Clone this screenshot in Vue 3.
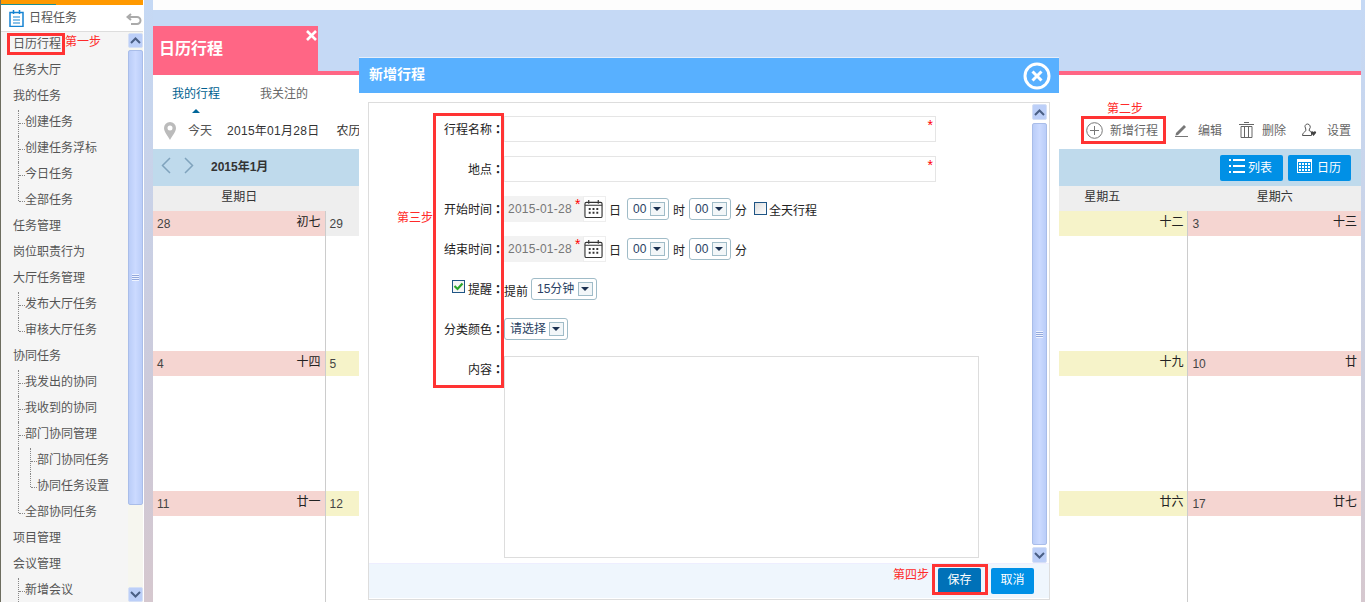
<script setup>
const menu = [
  { t: '日历行程', l: 0 }, { t: '任务大厅', l: 0 }, { t: '我的任务', l: 0 },
  { t: '创建任务', l: 1 }, { t: '创建任务浮标', l: 1 }, { t: '今日任务', l: 1 }, { t: '全部任务', l: 1, end: true },
  { t: '任务管理', l: 0 }, { t: '岗位职责行为', l: 0 }, { t: '大厅任务管理', l: 0 },
  { t: '发布大厅任务', l: 1 }, { t: '审核大厅任务', l: 1, end: true },
  { t: '协同任务', l: 0 },
  { t: '我发出的协同', l: 1 }, { t: '我收到的协同', l: 1 }, { t: '部门协同管理', l: 1 },
  { t: '部门协同任务', l: 2 }, { t: '协同任务设置', l: 2, end: true },
  { t: '全部协同任务', l: 1, end: true },
  { t: '项目管理', l: 0 }, { t: '会议管理', l: 0 }, { t: '新增会议', l: 1 },
]
const weekdays = ['星期日', '星期一', '星期二', '星期三', '星期四', '星期五', '星期六']
const weeks = [
  [['28', '初七', 'p'], ['29', '初八', 'g'], ['30', '初九', 'g'], ['31', '初十', 'g'], ['1', '十一', 'y'], ['2', '十二', 'y'], ['3', '十三', 'p']],
  [['4', '十四', 'p'], ['5', '十五', 'y'], ['6', '十六', 'y'], ['7', '十七', 'y'], ['8', '十八', 'y'], ['9', '十九', 'y'], ['10', '廿', 'p']],
  [['11', '廿一', 'p'], ['12', '廿二', 'y'], ['13', '廿三', 'y'], ['14', '廿四', 'y'], ['15', '廿五', 'y'], ['16', '廿六', 'y'], ['17', '廿七', 'p']],
]
</script>

<template>
  <div class="page">
    <aside class="side">
      <div class="top-bar"><i></i></div>
      <div class="side-head">
        <svg class="note" width="15" height="17" viewBox="0 0 15 17" fill="none" stroke="#1583d2">
          <rect x="1" y="2.500" width="13" height="14" stroke-width="1.500" />
          <path d="M4.500 0v4M10.500 0v4" stroke-width="1.500" />
          <path d="M4 7h7M4 10h7M4 13h7" stroke-width="1.200" />
        </svg>
        <span class="head-text">日程任务</span>
        <svg class="back" width="16" height="12" viewBox="0 0 16 12" fill="none" stroke="#aaa" stroke-width="2">
          <path d="M5 1 1.500 4 5 7" />
          <path d="M2 4h9a3.500 3.500 0 0 1 0 7H5" />
        </svg>
      </div>
      <div class="side-body">
        <ul class="menu">
          <li v-for="m in menu" :key="m.t" :class="['l' + m.l, { end: m.end }]">
            <i v-if="m.l === 2" class="outer"></i>
            {{ m.t }}
          </li>
        </ul>
        <div class="sbar">
          <div class="sbtn"><svg width="11" height="7" viewBox="0 0 11 7"><path d="M1 6l4.500-4.500L10 6" fill="none" stroke="#4a5f85" stroke-width="2" /></svg></div>
          <div class="sthumb main-thumb"><b></b></div>
          <div class="sbtn bottom"><svg width="11" height="7" viewBox="0 0 11 7"><path d="M1 1l4.500 4.500L10 1" fill="none" stroke="#4a5f85" stroke-width="2" /></svg></div>
        </div>
      </div>
    </aside>
    <div class="gutter"></div>

    <main class="main">
      <div class="white-strip"></div>
      <div class="band">
        <div class="tab">
          日历行程
          <svg class="tab-x" width="11" height="11" viewBox="0 0 11 11"><path d="m1 1 9 9m0-9-9 9" stroke="#fff" stroke-width="2.600" /></svg>
        </div>
      </div>
      <div class="panel">
        <div class="tabs">
          <span class="on">我的行程</span>
          <span>我关注的</span>
        </div>
        <div class="tool">
          <svg class="pin" width="12" height="18" viewBox="0 0 12 18"><path fill-rule="evenodd" d="M6 0a6 6 0 0 1 6 6c0 4-4 8-6 12C4 14 0 10 0 6a6 6 0 0 1 6-6zm0 3.500a2.500 2.500 0 1 0 0 5 2.500 2.500 0 0 0 0-5z" fill="#bbb" /></svg>
          <span class="today">今天</span>
          <span class="date">2015年01月28日</span>
          <span class="lunar">农历</span>
          <div class="actions">
            <span class="act add">
              <svg width="17" height="17" viewBox="0 0 17 17" fill="none" stroke="#777"><circle cx="8.500" cy="8.500" r="7.800" /><path d="M8.500 4v9M4 8.500h9" /></svg>
              新增行程
            </span>
            <span class="act edit">
              <svg width="13" height="14" viewBox="0 0 13 14"><path d="M1 10 9 2l2 2-8 8-2.500.5z" fill="#777" /><path d="M0 13.500h13" stroke="#777" /></svg>
              编辑
            </span>
            <span class="act del">
              <svg width="15" height="16" viewBox="0 0 15 16" fill="none" stroke="#666"><path d="M0 2.500h15M5 .5h5M2 4.500h11v11H2zM5.500 4.500v11M9.500 4.500v11" /></svg>
              删除
            </span>
            <span class="act set">
              <svg width="15" height="14" viewBox="0 0 15 14"><path d="M5.500 1a3 3 0 0 1 2 5L7 7.500c1.500.5 2.500 1.500 2.500 2.500v2.500H.5c0-2.500 2-3.500 3.500-5L3.500 5a2.500 2.500 0 0 1 2-4z" fill="none" stroke="#555" /><path d="M11.500 13 9 10c-.8-1.500 1.500-2.500 2.500-1 1-1.500 3.300-.5 2.500 1z" fill="#444" /></svg>
              设置
            </span>
          </div>
        </div>
      </div>
      <div class="nav-bar">
        <svg class="chev" width="33" height="17" viewBox="0 0 33 17" fill="none" stroke="#7fa3bd" stroke-width="1.500"><path d="M9 1 1.500 8.500 9 16M24 1l7.500 7.500L24 16" /></svg>
        <b class="month">2015年1月</b>
        <div class="views">
          <span class="vbtn v-list">
            <svg width="16" height="14" viewBox="0 0 16 14" fill="#fff"><path d="M0 0h2v2H0zM4 0h12v2H4zM0 6h2v2H0zM4 6h12v2H4zM0 12h2v2H0zM4 12h12v2H4z" /></svg>
            列表
          </span>
          <span class="vbtn v-cal">
            <svg width="15" height="14" viewBox="0 0 15 14" fill="#fff"><path fill-rule="evenodd" d="M0 0h15v14H0zM1 3v10h13V3z" /><path d="M2 4h2v2H2zM5 4h2v2H5zM8 4h2v2H8zM11 4h2v2h-2zM2 7h2v2H2zM5 7h2v2H5zM8 7h2v2H8zM11 7h2v2h-2zM2 10h2v2H2zM5 10h2v2H5zM8 10h2v2H8zM11 10h2v2h-2z" /></svg>
            日历
          </span>
        </div>
      </div>
      <div class="week-head">
        <span v-for="d in weekdays" :key="d">{{ d }}</span>
      </div>
      <div v-for="(w, i) in weeks" :key="i" class="week">
        <div v-for="c in w" :key="c[0]" class="cell">
          <div :class="['cell-head', c[2]]"><span>{{ c[0] }}</span><span class="lun">{{ c[1] }}</span></div>
        </div>
      </div>
    </main>
    <div class="edge"></div>

    <section class="dialog">
      <header class="dlg-title">
        新增行程
        <svg class="dlg-close" width="28" height="28" viewBox="0 0 28 28" fill="none" stroke="#fff"><circle cx="14" cy="14" r="12" stroke-width="3" /><path d="m9.500 9.500 9 9m0-9-9 9" stroke-width="3" /></svg>
      </header>
      <div class="frame">
        <div class="frame-main">
          <form class="form">
            <div class="row">
              <label>行程名称<em>：</em></label>
              <div class="inp"><i class="star">*</i></div>
            </div>
            <div class="row">
              <label>地点<em>：</em></label>
              <div class="inp"><i class="star">*</i></div>
            </div>
            <div v-for="lab in ['开始时间', '结束时间']" :key="lab" class="row">
              <label>{{ lab }}<em>：</em></label>
              <div class="dt"><span>2015-01-28</span><i class="star">*</i></div>
              <div class="cal">
                <svg width="20" height="20" viewBox="0 0 20 20" fill="none" stroke="#333"><rect x="1" y="3" width="18" height="16" rx="1.500" stroke-width="1.200" /><path d="M5 .5v4M15 .5v4M1 6h18" stroke-width="1.200" /><path d="M5 9h2v2H5zM9 9h2v2H9zM13 9h2v2h-2zM5 13h2v2H5zM9 13h2v2H9zM13 13h2v2h-2z" fill="#333" stroke="none" /></svg>
              </div>
              <span class="unit u1">日</span>
              <span class="sel num">00<i class="arrow"></i></span>
              <span class="unit u2">时</span>
              <span class="sel num">00<i class="arrow"></i></span>
              <span class="unit u3">分</span>
              <template v-if="lab === '开始时间'">
                <i class="chk"></i><span class="allday">全天行程</span>
              </template>
            </div>
            <div class="row">
              <label><i class="chk on"><svg width="11" height="9" viewBox="0 0 11 9"><path d="m1.500 4 3 3 5-5.500" fill="none" stroke="#2aa52a" stroke-width="2.200" /></svg></i>提醒<em>：</em></label>
              <span class="ahead">提前</span>
              <span class="sel wide">15分钟<i class="arrow"></i></span>
            </div>
            <div class="row">
              <label>分类颜色<em>：</em></label>
              <span class="sel pick">请选择<i class="arrow"></i></span>
            </div>
            <div class="row content">
              <label>内容<em>：</em></label>
              <div class="area"></div>
            </div>
          </form>
          <div class="sbar dlg-bar">
            <div class="sbtn"><svg width="11" height="7" viewBox="0 0 11 7"><path d="M1 6l4.500-4.500L10 6" fill="none" stroke="#4a5f85" stroke-width="2" /></svg></div>
            <div class="sthumb dlg-thumb"><b></b></div>
            <div class="sbtn"><svg width="11" height="7" viewBox="0 0 11 7"><path d="M1 1l4.500 4.500L10 1" fill="none" stroke="#4a5f85" stroke-width="2" /></svg></div>
          </div>
        </div>
        <footer class="foot">
          <span class="btn save">保存</span>
          <span class="btn">取消</span>
        </footer>
      </div>
    </section>

    <span class="mark box1"></span>
    <span class="note-red n1">第一步</span>
    <span class="mark box2"></span>
    <span class="note-red n2">第二步</span>
    <span class="mark box3"></span>
    <span class="note-red n3">第三步</span>
    <span class="mark box4"></span>
    <span class="note-red n4">第四步</span>
  </div>
</template>

<style scoped>
.page {
  position: relative;
  display: flex;
  width: 1365px;
  height: 602px;
  overflow: hidden;
  background: #c5d9f5;
  font: 12px "Liberation Sans", "Noto Sans CJK SC", sans-serif;
  color: #333;
}
ul { margin: 0; padding: 0; list-style: none; }
em, i { font-style: normal; }

/* sidebar */
.side { width: 143px; flex: none; display: flex; flex-direction: column; border-left: 1px solid #6d6d5f; box-sizing: border-box; background: #f5f5f5; }
.top-bar { height: 5px; background: #ff9900; position: relative; }
.top-bar i { position: absolute; left: 0; bottom: 0; width: 55px; height: 1px; background: #1f8f8f; }
.side-head { height: 27px; flex: none; box-sizing: border-box; background: #fff; border-bottom: 1px solid #ddd; display: flex; align-items: center; color: #555; position: relative; padding-left: 8px; }
.note { margin-right: 5px; }
.head-text { margin-top: -3px; }
.back { position: absolute; right: 1px; top: 8px; }
.side-body { flex: 1; display: flex; min-height: 0; }
.menu { width: 127px; height: 570px; color: #555; flex: none; }
.menu li { height: 26px; line-height: 24px; position: relative; padding-left: 12px; box-sizing: border-box; white-space: nowrap; }
.menu li.l1 { padding-left: 24px; }
.menu li.l2 { padding-left: 36px; }
.menu li.l1::before, .menu li.l2::before, .menu .outer { content: ""; position: absolute; left: 17px; top: 0; height: 100%; border-left: 1px dotted #888; }
.menu li.l2::before { left: 29px; }
.menu li.end::before { height: 50%; }
.menu li.l1::after, .menu li.l2::after { content: ""; position: absolute; left: 18px; top: 50%; width: 6px; border-top: 1px dotted #888; }
.menu li.l2::after { left: 30px; }

/* scrollbars */
.sbar { width: 15px; flex: none; background: #f6f6ef; display: flex; flex-direction: column; padding-top: 1px; }
.sbtn { height: 15px; flex: none; background: #bccff8; border: 1px solid #d5e0f6; border-radius: 2px; box-sizing: border-box; display: flex; align-items: center; justify-content: center; }
.sbtn.bottom { margin-top: auto; }
.sthumb { margin-top: 2px; background: linear-gradient(90deg, #bacdf8, #cbdaff 50%, #bacdf8); border: 1px solid #a9bde9; border-radius: 2px; box-sizing: border-box; display: flex; align-items: center; justify-content: center; }
.sthumb b { width: 7px; height: 7px; background: repeating-linear-gradient(#eef3ff 0 1px, #93a9dc 1px 2px); }
.main-thumb { height: 455px; }

.gutter { width: 10px; flex: none; background: linear-gradient(#c5d9f5, #cdc9d8 70%, #d6c8cf); border-left: 1px solid #fff; box-sizing: border-box; }

/* main */
.main { width: 1208px; flex: none; display: flex; flex-direction: column; }
.edge { flex: 1; background: linear-gradient(#c5d9f5, #cdd0e0 60%, #d6c8cf); }
.white-strip { height: 10px; flex: none; background: #fdfdfd; }
.band { height: 61px; flex: none; display: flex; align-items: flex-end; border-bottom: 4px solid #ff6685; box-sizing: content-box; }
.tab { position: relative; width: 165px; height: 45px; background: #ff6685; color: #fff; font-size: 16px; font-weight: 700; line-height: 46px; padding-left: 6px; box-sizing: border-box; }
.tab-x { position: absolute; right: 1px; top: 4px; }
.panel { height: 74px; flex: none; background: #fff; display: flex; flex-direction: column; }
.tabs { height: 37px; display: flex; gap: 40px; padding: 11px 0 0 19px; box-sizing: border-box; color: #666; flex: none; }
.tabs span { line-height: 17px; position: relative; }
.tabs .on { color: #005f8f; }
.tabs .on::after { content: ""; position: absolute; left: 20px; top: 23px; border: 4px solid transparent; border-top: 0; border-bottom: 4px solid #006699; }
.tool { flex: 1; display: flex; align-items: center; padding: 0 0 3px 11px; box-sizing: border-box; position: relative; color: #555; }
.pin { margin-top: 3px; }
.today { margin-left: 12px; }
.date { margin-left: 15px; color: #333; letter-spacing: 0.28px; }
.lunar { margin-left: 17px; color: #333; }
.actions { margin-left: auto; display: flex; align-items: center; color: #666; padding-right: 10px; }
.act { display: flex; align-items: center; }
.act svg { margin-top: 2px; }
.add svg { margin-right: 7px; }
.edit { margin-left: 17px; }
.edit svg { margin-right: 10px; }
.del { margin-left: 17px; }
.del svg { margin-right: 8px; }
.set { margin-left: 16px; }
.set svg { margin-right: 10px; }

.nav-bar { height: 37px; flex: none; background: #bfdaec; display: flex; align-items: center; padding-left: 8px; }
.chev { margin-bottom: 4px; }
.month { margin-left: 17px; margin-bottom: 4px; font-size: 12px; color: #333; }
.views { margin-left: auto; display: flex; gap: 5px; padding-right: 10px; }
.vbtn { width: 63px; height: 26px; background: #0090e6; color: #fff; border-radius: 2px; display: flex; align-items: center; padding: 0 0 3px 9px; box-sizing: border-box; font-size: 12px; }
.v-list { gap: 3px; }
.v-cal { gap: 5px; }
.week-head { height: 25px; flex: none; display: grid; grid-template-columns: repeat(7, 1fr); background: #eee; text-align: center; line-height: 22px; color: #333; }
.week { height: 140px; flex: none; display: grid; grid-template-columns: repeat(7, 1fr); background: #fff; }
.cell { border-right: 1px solid #ccc; }
.cell:last-child { border-right: 0; }
.cell-head { height: 25px; display: flex; justify-content: space-between; padding: 0 4px; color: #444; line-height: 27px; }
.cell-head.p { background: #f5d5d1; }
.cell-head.y { background: #f6f3c9; }
.cell-head.g { background: #eee; }
.lun { color: #222; line-height: 23px; }

/* dialog */
.dialog { position: absolute; left: 359px; top: 57px; width: 700px; height: 560px; background: #fff; border-top: 1px solid #e6eefa; box-sizing: border-box; }
.dlg-title { height: 35px; background: #58b0ff; color: #fff; font-size: 14px; font-weight: 700; line-height: 32px; padding-left: 10px; position: relative; }
.dlg-close { position: absolute; right: 8px; top: 4px; }
.frame { margin: 9px 0 0 9px; width: 682px; height: 498px; border: 1px solid #ddd; box-sizing: border-box; display: flex; flex-direction: column; }
.frame-main { height: 460px; display: flex; flex: none; }
.form { width: 663px; flex: none; padding-top: 6px; box-sizing: border-box; }
.row { height: 40px; display: flex; align-items: center; color: #222; position: relative; }
.row label { width: 135px; flex: none; text-align: right; display: flex; justify-content: flex-end; align-items: center; margin-top: -1px; }
.row em { font-family: "Noto Sans CJK TC", sans-serif; font-weight: 700; width: 12px; text-align: center; }
.star { color: #f00; position: absolute; font-size: 14px; line-height: 12px; }
.inp { width: 432px; height: 26px; border: 1px solid #e5e5e5; border-left-color: #f0f0f0; box-sizing: border-box; position: relative; }
.inp .star { right: 2px; top: 2px; }
.dt { width: 79px; height: 26px; background: #f2f2f2; color: #777; line-height: 26px; padding-left: 4px; box-sizing: border-box; position: relative; font-size: 12px; letter-spacing: 0.25px; white-space: nowrap; }
.dt .star { left: 71px; top: 2px; }
.cal { width: 23px; height: 26px; border: 1px solid #eee; box-sizing: border-box; display: flex; align-items: center; justify-content: center; margin-left: 0; padding-right: 2px; }
.unit { width: 12px; flex: none; }
.u1 { margin: 0 6px 0 3px; }
.u2 { margin: 0 4px; }
.u3 { margin: 0 6px 0 4px; }
.sel { height: 22px; border: 1px solid #a0bcc8; border-radius: 3px; box-sizing: border-box; display: flex; align-items: center; color: #2a3f63; position: relative; padding-left: 5px; }
.sel.num { width: 42px; }
.sel.wide { width: 66px; margin-left: 3px; padding-bottom: 3px; }
.sel.pick { width: 64px; padding-bottom: 3px; }
.arrow { position: absolute; right: 3px; top: 3px; width: 15px; height: 14px; background: #f2f6f8; border: 1px solid #a0bcc8; box-sizing: border-box; }
.arrow::after { content: ""; position: absolute; left: 2px; top: 4px; border: 4px solid transparent; border-bottom: 0; border-top: 4px solid #1b3050; }
.chk { width: 13px; height: 13px; border: 1px solid #1f5585; background: linear-gradient(135deg, #ddd, #fff); box-sizing: border-box; flex: none; margin-left: 1px; margin-top: -2px; display: inline-flex; align-items: center; justify-content: center; }
.chk.on { margin: -4px 3px 0 0; background: #f5f5f5; }
.allday { margin-left: 2px; }
.ahead { width: 24px; flex: none; margin-top: 2px; }
.content { height: 202px; align-items: flex-start; padding-top: 7px; }
.content label { height: 26px; }
.area { width: 475px; height: 202px; border: 1px solid #ddd; box-sizing: border-box; }
.dlg-bar { height: 460px; background: #fff; padding-top: 1px; margin-top: 0; }
.dlg-bar .sbtn { height: 16px; }
.dlg-thumb { height: 422px; margin: 3px 0 2px; }
.foot { height: 35px; flex: none; background: #eff6fd; display: flex; justify-content: flex-end; align-items: center; gap: 10px; padding-right: 15px; box-sizing: border-box; border-top: 1px solid #eef; }
.btn { width: 43px; height: 26px; background: #0090e6; color: #fff; text-align: center; line-height: 25px; border-radius: 2px; }
.btn.save { background: #0071b8; }

/* annotations */
.mark { position: absolute; border: 3px solid #ff3333; box-sizing: border-box; }
.box1 { left: 7px; top: 33px; width: 58px; height: 22px; }
.box2 { left: 1081px; top: 116px; width: 85px; height: 28px; }
.box3 { left: 433px; top: 113px; width: 71px; height: 275px; }
.box4 { left: 932px; top: 564px; width: 56px; height: 31px; }
.note-red { position: absolute; color: #ff2a2a; line-height: 16px; }
.n1 { left: 65px; top: 34px; }
.n2 { left: 1107px; top: 101px; }
.n3 { left: 397px; top: 210px; }
.n4 { left: 893px; top: 567px; }
</style>

<style>
html, body { margin: 0; background: #fff; }
</style>
